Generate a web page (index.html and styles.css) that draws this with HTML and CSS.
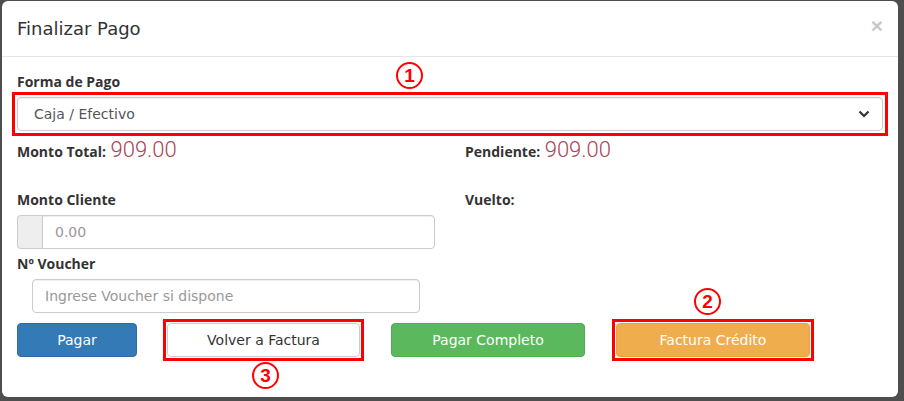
FILE: index.html
```html
<!DOCTYPE html>
<html lang="es">
<head>
    <meta charset="UTF-8">
    <meta name="viewport" content="width=device-width, initial-scale=1.0">
    <title>Finalizar Pago</title>
    <link rel="stylesheet" href="styles.css">
</head>
<body>
    <div class="modal">
        <div class="modal-header">
            <h4 class="modal-title">Finalizar Pago</h4>
            <button type="button" class="close">&times;</button>
        </div>

        <div class="modal-body">
            <div class="form-group">
                <label>Forma de Pago</label>
                <div class="mark mark-select">
                    <div class="select-box">
                        <span class="select-text">Caja / Efectivo</span>
                        <svg class="chevron" width="12" height="8" viewBox="0 0 12 8"><path d="M1.5 1.5 L6 6 L10.5 1.5" fill="none" stroke="#333" stroke-width="2.2"/></svg>
                    </div>
                </div>
            </div>

            <div class="row totals">
                <div class="col"><b>Monto Total:</b> <span class="amount">909.00</span></div>
                <div class="col"><b>Pendiente:</b> <span class="amount">909.00</span></div>
            </div>

            <div class="row">
                <div class="col">
                    <label for="montoCliente">Monto Cliente</label>
                    <div class="input-group">
                        <span class="addon"></span>
                        <input type="text" id="montoCliente" class="form-control" placeholder="0.00">
                    </div>
                    <label for="voucher" class="voucher-label">N&ordm; Voucher</label>
                    <input type="text" id="voucher" class="form-control voucher" placeholder="Ingrese Voucher si dispone">
                </div>
                <div class="col">
                    <label>Vuelto:</label>
                </div>
            </div>

            <div class="actions">
                <button type="button" class="btn btn-primary btn-pagar">Pagar</button>
                <div class="mark mark-btn"><button type="button" class="btn btn-default">Volver a Factura</button></div>
                <button type="button" class="btn btn-success">Pagar Completo</button>
                <div class="mark mark-btn"><button type="button" class="btn btn-warning">Factura Cr&eacute;dito</button></div>
            </div>
        </div>

        <!-- annotation numbers -->
        <span class="step step-1">1</span>
        <span class="step step-2">2</span>
        <span class="step step-3">3</span>
    </div>
</body>
</html>
```

FILE: styles.css
```css
html, body {
    margin: 0;
    height: 100%;
    overflow: hidden;
}
body {
    background-color: #4e4e4e;
    font-family: "DejaVu Sans", "Liberation Sans", sans-serif;
    font-size: 14px;
    color: #333;
}
.modal {
    position: relative;
    width: 896px;
    height: 396px;
    margin: 1px 0 0 2px;
    background: #fff;
    border-radius: 6px;
}
.modal-header {
    display: flex;
    align-items: center;
    justify-content: space-between;
    padding: 15px;
    border-bottom: 1px solid #e5e5e5;
}
.modal-title {
    margin: 0;
    font-size: 18px;
    font-weight: 400;
    line-height: 25px;
}
.close {
    border: none;
    background: none;
    padding: 0;
    margin-top: -6px;
    font-family: "Liberation Sans", sans-serif;
    font-size: 21px;
    font-weight: 700;
    color: #c8c8c8;
    line-height: 1;
}
.modal-body {
    padding: 15px;
}
label, .totals b {
    font-family: "Open Sans", sans-serif;
    font-weight: 700;
    font-size: 14px;
}
label {
    display: block;
    line-height: 20px;
    margin-bottom: 5px;
}
.form-control {
    display: block;
    width: 100%;
    height: 34px;
    box-sizing: border-box;
    padding: 6px 12px;
    font-family: inherit;
    font-size: 14px;
    color: #555;
    border: 1px solid #ccc;
    border-radius: 4px;
    background: #fff;
    box-shadow: inset 0 1px 1px rgba(0, 0, 0, 0.075);
}
.form-control::placeholder {
    color: #999;
}
.select-box {
    display: flex;
    align-items: center;
    justify-content: space-between;
    height: 34px;
    box-sizing: border-box;
    padding: 0 12px 0 16px;
    border: 1px solid #ccc;
    border-radius: 4px;
    background: #fff;
    box-shadow: inset 0 1px 1px rgba(0, 0, 0, 0.075);
    color: #555;
}
.mark {
    border: 3px solid #f00;
}
.mark-select {
    margin: -5px;
    padding: 2px;
}
.mark-btn {
    margin: -4px;
    padding: 1px;
    display: flex;
}
.row {
    display: flex;
    margin: 0 -15px;
}
.col {
    width: 50%;
    padding: 0 15px;
    box-sizing: border-box;
}
.totals {
    margin-top: 4px;
    margin-bottom: 23px;
    line-height: 30px;
}
.amount {
    font-family: "Roboto", "Liberation Sans", sans-serif;
    font-weight: 300;
    font-size: 22px;
    color: #a94452;
}
.input-group {
    display: flex;
}
.addon {
    flex: none;
    width: 25px;
    height: 34px;
    box-sizing: border-box;
    background: #eee;
    border: 1px solid #ccc;
    border-right: none;
    border-radius: 4px 0 0 4px;
}
.input-group .form-control {
    border-radius: 0 4px 4px 0;
}
.voucher-label {
    margin-top: 5px;
}
.voucher {
    margin: 0 15px;
    width: calc(100% - 30px);
}
.actions {
    display: flex;
    gap: 30px;
    margin-top: 10px;
}
.btn {
    height: 34px;
    width: 194px;
    padding: 6px 12px;
    font-family: inherit;
    font-size: 14px;
    border: 1px solid transparent;
    border-radius: 4px;
    color: #fff;
}
.btn-pagar {
    width: 120px;
}
.btn-primary {
    background-color: #337ab7;
    border-color: #2e6da4;
}
.btn-default {
    background-color: #fff;
    border-color: #ccc;
    color: #333;
    width: 193px;
}
.btn-success {
    background-color: #5cb85c;
    border-color: #4cae4c;
    margin-left: 1px;
}
.btn-warning {
    background-color: #f0ad4e;
    border-color: #eea236;
}
.btn-success + .mark-btn {
    margin-left: -3px;
}
.step {
    position: absolute;
    width: 23px;
    height: 23px;
    border: 2px solid #f00;
    border-radius: 50%;
    color: #f00;
    font-family: "Liberation Sans", sans-serif;
    font-weight: 700;
    font-size: 19px;
    line-height: 23px;
    text-align: center;
}
.step-1 {
    left: 394px;
    top: 61px;
}
.step-2 {
    left: 692px;
    top: 287px;
}
.step-3 {
    left: 250px;
    top: 361px;
}
```
